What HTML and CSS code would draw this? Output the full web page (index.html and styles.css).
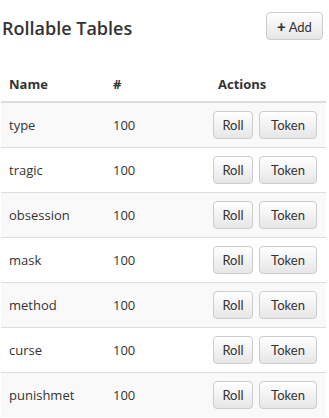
FILE: index.html
```html
<!DOCTYPE html>
<html lang="en">
<head>
  <meta charset="UTF-8" />
  <title>Rollable Tables</title>
  <link rel="stylesheet" href="styles.css">
</head>
<body>
  <div class="page">
    <div class="page-head">
      <h1>Rollable Tables</h1>
      <button class="btn btn-add"><span class="plus">+</span> Add</button>
    </div>
    <table class="tables">
      <thead>
        <tr>
          <th class="col-name">Name</th>
          <th class="col-count">#</th>
          <th class="col-actions">Actions</th>
        </tr>
      </thead>
      <tbody>
        <tr><td>type</td><td>100</td><td class="actions"><button class="btn btn-roll">Roll</button><button class="btn btn-token">Token</button></td></tr>
        <tr><td>tragic</td><td>100</td><td class="actions"><button class="btn btn-roll">Roll</button><button class="btn btn-token">Token</button></td></tr>
        <tr><td>obsession</td><td>100</td><td class="actions"><button class="btn btn-roll">Roll</button><button class="btn btn-token">Token</button></td></tr>
        <tr><td>mask</td><td>100</td><td class="actions"><button class="btn btn-roll">Roll</button><button class="btn btn-token">Token</button></td></tr>
        <tr><td>method</td><td>100</td><td class="actions"><button class="btn btn-roll">Roll</button><button class="btn btn-token">Token</button></td></tr>
        <tr><td>curse</td><td>100</td><td class="actions"><button class="btn btn-roll">Roll</button><button class="btn btn-token">Token</button></td></tr>
        <tr><td>punishmet</td><td>100</td><td class="actions"><button class="btn btn-roll">Roll</button><button class="btn btn-token">Token</button></td></tr>
      </tbody>
    </table>
  </div>
</body>
</html>
```

FILE: styles.css
```css
* {
  margin: 0;
  padding: 0;
  box-sizing: border-box;
}
body {
  font-family: 'Open Sans', sans-serif;
  font-size: 13px;
  color: #333;
  background: #fff;
}
.page {
  width: 326px;
  padding-left: 1px;
}
.page-head {
  display: flex;
  justify-content: space-between;
  align-items: center;
  padding: 12px 3px 0 1px;
  height: 40px;
}
.page-head h1 {
  font-size: 18px;
  font-weight: 600;
  color: #333;
  margin-top: 4px;
}
.btn {
  font-family: 'Lato', sans-serif;
  font-size: 13px;
  color: #333;
  background: linear-gradient(#fff, #e6e6e6);
  border: 1px solid #ccc;
  border-radius: 4px;
  height: 28px;
  padding: 0;
  cursor: pointer;
}
.btn-add {
  width: 57px;
}
.plus {
  font-weight: 900;
  font-size: 15px;
}
.tables {
  width: 100%;
  border-collapse: collapse;
  margin-top: 26px;
}
.tables th {
  text-align: left;
  font-weight: 700;
  padding: 8px;
  height: 36px;
  border-bottom: 2px solid #ddd;
}
.col-name { width: 104px; }
.col-count { width: 105px; }
.col-actions { padding-left: 9px; }
.tables td {
  padding: 0 8px;
  height: 45px;
  border-bottom: 1px solid #ddd;
}
.tables tbody tr:nth-child(odd) {
  background: #f9f9f9;
}
.tables tbody tr:last-child td {
  border-bottom: none;
}
.tables td.actions {
  white-space: nowrap;
  padding-left: 3px;
}
.btn-roll {
  width: 40px;
  margin-right: 6px;
}
.btn-token {
  width: 58px;
}
```
